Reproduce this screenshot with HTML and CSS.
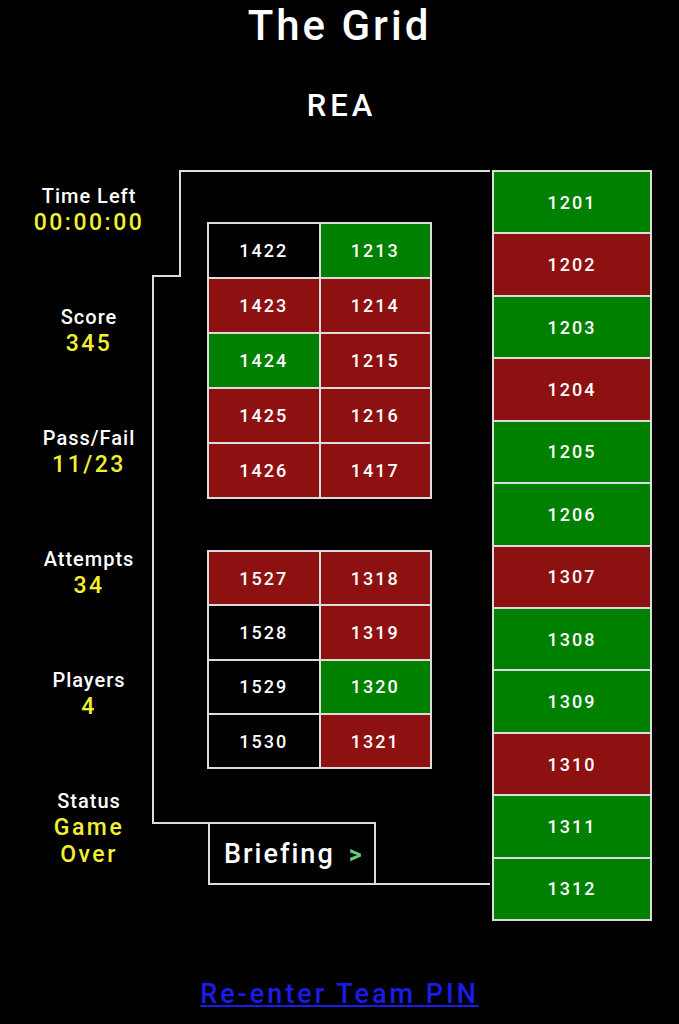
FILE: index.html
```html
<!DOCTYPE html>
<html lang="en">
<head>
<meta charset="utf-8">
<title>The Grid</title>
<link rel="stylesheet" href="styles.css">
</head>
<body>
<header class="header">
  <h1 class="title">The Grid</h1>
  <h2 class="team">REA</h2>
</header>
<main class="main">
  <aside class="stats">
    <div class="stat"><div class="stat-label">Time Left</div><div class="stat-value">00:00:00</div></div>
    <div class="stat"><div class="stat-label">Score</div><div class="stat-value">345</div></div>
    <div class="stat"><div class="stat-label">Pass/Fail</div><div class="stat-value">11/23</div></div>
    <div class="stat"><div class="stat-label">Attempts</div><div class="stat-value">34</div></div>
    <div class="stat"><div class="stat-label">Players</div><div class="stat-value">4</div></div>
    <div class="stat"><div class="stat-label">Status</div><div class="stat-value">Game<br>Over</div></div>
  </aside>
  <section class="board">
    <div class="frame-top">
      <div class="notch-top"></div>
      <div class="frame-top-main"></div>
    </div>
    <div class="frame-mid">
      <div class="grid grid-a">
        <div class="cell off">1422</div><div class="cell pass">1213</div>
        <div class="cell fail">1423</div><div class="cell fail">1214</div>
        <div class="cell pass">1424</div><div class="cell fail">1215</div>
        <div class="cell fail">1425</div><div class="cell fail">1216</div>
        <div class="cell fail">1426</div><div class="cell fail">1417</div>
      </div>
      <div class="grid grid-b">
        <div class="cell fail">1527</div><div class="cell fail">1318</div>
        <div class="cell off">1528</div><div class="cell fail">1319</div>
        <div class="cell off">1529</div><div class="cell pass">1320</div>
        <div class="cell off">1530</div><div class="cell fail">1321</div>
      </div>
    </div>
    <div class="frame-bottom">
      <div class="notch-bottom"></div>
      <a class="briefing" href="#">Briefing<span class="chev">&gt;</span></a>
      <div class="frame-bottom-rest"></div>
    </div>
  </section>
  <section class="column">
    <div class="tile pass">1201</div>
    <div class="tile fail">1202</div>
    <div class="tile pass">1203</div>
    <div class="tile fail">1204</div>
    <div class="tile pass">1205</div>
    <div class="tile pass">1206</div>
    <div class="tile fail">1307</div>
    <div class="tile pass">1308</div>
    <div class="tile pass">1309</div>
    <div class="tile fail">1310</div>
    <div class="tile pass">1311</div>
    <div class="tile pass">1312</div>
  </section>
</main>
<footer class="footer">
  <a class="pin-link" href="#">Re-enter Team PIN</a>
</footer>
</body>
</html>
```
FILE: styles.css
```css
* { box-sizing: border-box; }

html, body {
  margin: 0;
  padding: 0;
  background: #000;
  color: #fff;
  font-family: Roboto, "Liberation Sans", sans-serif;
}

.header {
  text-align: center;
}

.title {
  margin: 0;
  font-size: 42px;
  line-height: 52px;
  font-weight: 500;
  letter-spacing: 3px;
}

.team {
  margin: 34px 0 0;
  font-size: 31px;
  line-height: 40px;
  font-weight: 500;
  letter-spacing: 4px;
  padding-left: 4px;
}

.main {
  display: flex;
  margin-top: 44px;
}

/* stats column */
.stats {
  width: 152px;
  padding: 14px 0 0 26px;
  display: flex;
  flex-direction: column;
}

.stat {
  height: 121px;
  text-align: center;
}

.stat-label {
  font-size: 20px;
  line-height: 24px;
  font-weight: 500;
  letter-spacing: 1px;
}

.stat-value {
  color: #f2f030;
  font-size: 23px;
  line-height: 26.5px;
  font-weight: 500;
  letter-spacing: 2.5px;
  padding-top: 2px;
}

/* central board with frame */
.board {
  width: 338px;
  display: flex;
  flex-direction: column;
}

.frame-top {
  display: flex;
  height: 107px;
}

.notch-top {
  width: 27px;
  border-bottom: 2px solid #dcdcdc;
}

.frame-top-main {
  flex: 1;
  border-top: 2px solid #dcdcdc;
  border-left: 2px solid #dcdcdc;
}

.frame-mid {
  height: 545px;
  border-left: 2px solid #dcdcdc;
  display: flex;
  flex-direction: column;
  padding-left: 53px;
}

.grid {
  display: grid;
  grid-template-columns: 109.5px 109.5px;
  gap: 2px;
  padding: 2px;
  background: #dcdcdc;
  width: max-content;
}

.grid-a {
  margin-top: -55px;
  grid-auto-rows: 53px;
}

.grid-b {
  margin-top: 51px;
  grid-auto-rows: 52.3px;
}

.cell, .tile {
  display: flex;
  align-items: center;
  justify-content: center;
  font-size: 18px;
  font-weight: 500;
  letter-spacing: 2px;
  color: #fff;
}

.off { background: #000; }
.pass { background: #008000; }
.fail { background: #8e1111; }

.frame-bottom {
  display: flex;
  height: 63px;
}

.notch-bottom {
  width: 56px;
  border-top: 2px solid #dcdcdc;
}

.briefing {
  width: 168px;
  border: 2px solid #dcdcdc;
  display: flex;
  align-items: center;
  padding-left: 14px;
  padding-top: 1px;
  color: #fff;
  text-decoration: none;
  font-size: 27px;
  font-weight: 500;
  letter-spacing: 2px;
}

.chev {
  color: #66cc77;
  font-size: 25px;
  font-weight: 700;
  margin-left: 14px;
}

.frame-bottom-rest {
  flex: 1;
  border-bottom: 2px solid #dcdcdc;
}

/* right column */
.column {
  margin-left: 2px;
  width: 160px;
  display: flex;
  flex-direction: column;
  gap: 2px;
  padding: 2px;
  background: #dcdcdc;
  height: 751px;
}

.tile {
  flex: 1;
}

.footer {
  text-align: center;
  margin-top: 55px;
}

.pin-link {
  color: #1c1ce6;
  font-size: 27px;
  line-height: 36px;
  font-weight: 500;
  letter-spacing: 3px;
  text-decoration: underline;
  text-underline-offset: 2px;
}
```
